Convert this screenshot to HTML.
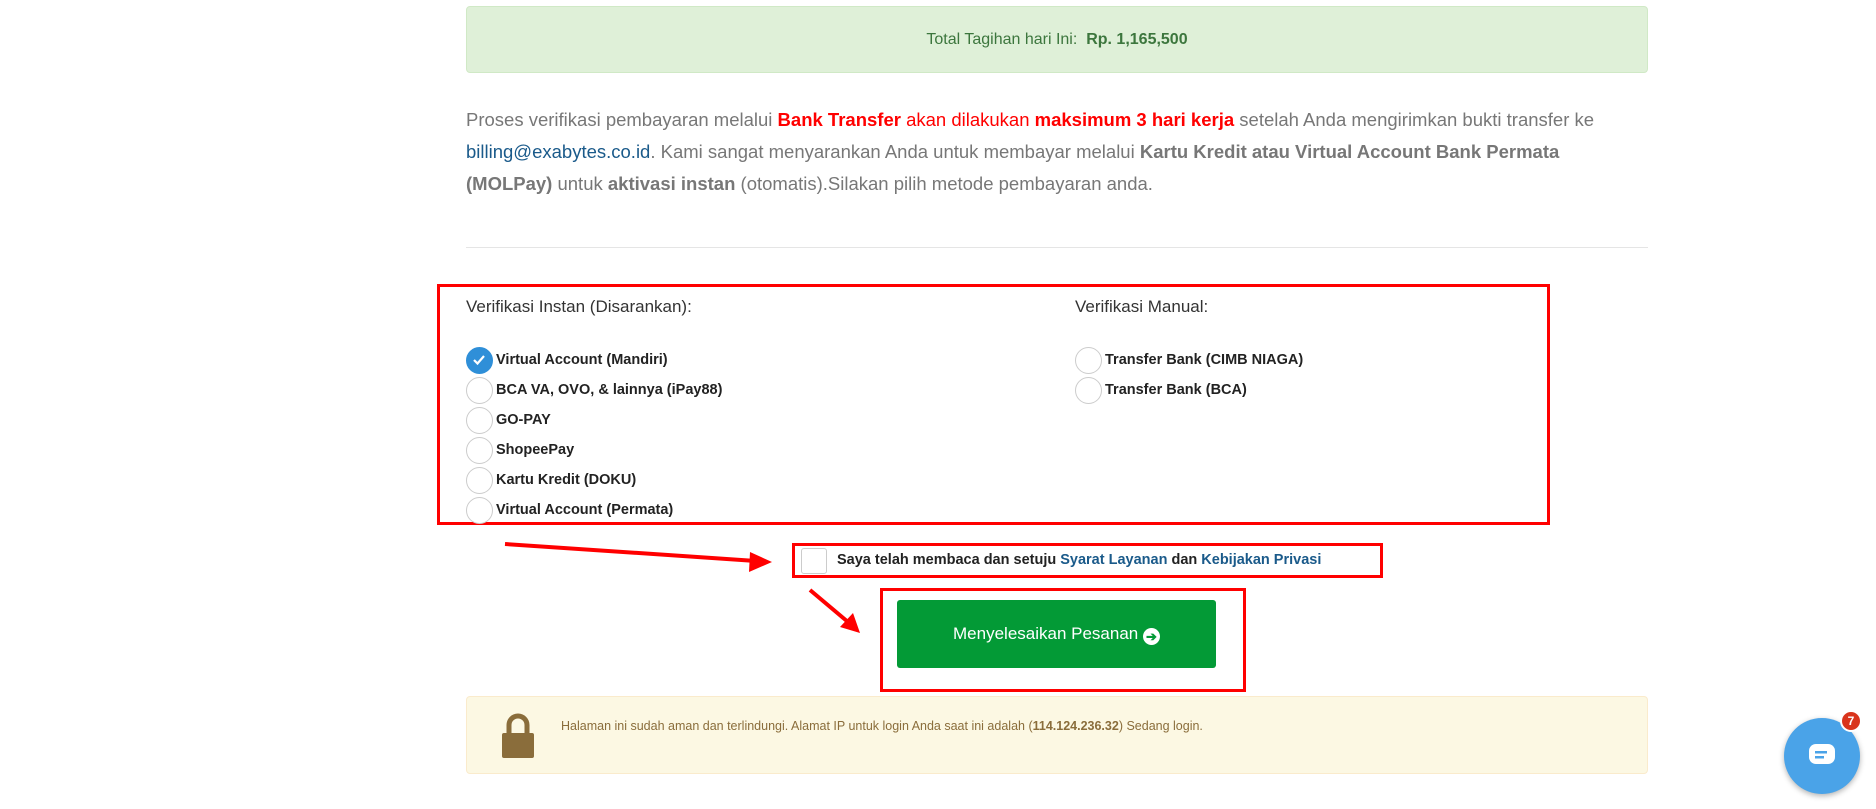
<!DOCTYPE html>
<html><head><meta charset="utf-8"><style>
*{box-sizing:border-box;margin:0;padding:0}
body{width:1876px;height:809px;background:#fff;font-family:"Liberation Sans",sans-serif;position:relative;overflow:hidden}
.abs{position:absolute}
.green{left:466px;top:6px;width:1182px;height:67px;background:#dff0d8;border:1px solid #d0e9c6;border-radius:4px;text-align:center;line-height:65px;font-size:16px;color:#3c763d}
.para{left:466px;top:104px;width:1182px;font-size:18.5px;line-height:32px;color:#777}
.red{color:#f00}
.hr{left:466px;top:247px;width:1182px;height:1px;background:#e5e5e5}
.box{border:3px solid #f00}
h4{position:absolute;font-size:17px;font-weight:normal;color:#333}
.opt{position:absolute;font-size:14.5px;font-weight:bold;color:#222;line-height:28px;height:28px;padding-left:30px}
.opt:before{content:"";position:absolute;left:0;top:1px;width:25px;height:25px;border:1px solid #ccc;border-radius:50%;background:#fff}
.opt.on:before{background:#2f8fd8;border-color:#2f8fd8}
.link{color:#1a5a8a}
</style></head><body>
<div class="abs green">Total Tagihan hari Ini:&nbsp; <b>Rp. 1,165,500</b></div>
<div class="abs para">Proses verifikasi pembayaran melalui <b class="red">Bank Transfer</b> <span class="red">akan dilakukan</span> <b class="red">maksimum 3 hari kerja</b> setelah Anda mengirimkan bukti transfer ke <span class="link">billing@exabytes.co.id</span>. Kami sangat menyarankan Anda untuk membayar melalui <b>Kartu Kredit atau Virtual Account Bank Permata (MOLPay)</b> untuk <b>aktivasi instan</b> (otomatis).Silakan pilih metode pembayaran anda.</div>
<div class="abs hr"></div>
<div class="abs box" style="left:437px;top:284px;width:1113px;height:241px"></div>
<h4 style="left:466px;top:297px">Verifikasi Instan (Disarankan):</h4>
<h4 style="left:1075px;top:297px">Verifikasi Manual:</h4>
<div class="opt on" style="left:466px;top:346px">Virtual Account (Mandiri)</div>
<svg class="abs" style="left:471px;top:352px" width="16" height="16"><path d="M3 8l3.5 3.5L13 4" stroke="#fff" stroke-width="2.2" fill="none"/></svg>
<div class="opt" style="left:466px;top:376px">BCA VA, OVO, &amp; lainnya (iPay88)</div>
<div class="opt" style="left:466px;top:406px">GO-PAY</div>
<div class="opt" style="left:466px;top:436px">ShopeePay</div>
<div class="opt" style="left:466px;top:466px">Kartu Kredit (DOKU)</div>
<div class="opt" style="left:466px;top:496px">Virtual Account (Permata)</div>
<div class="opt" style="left:1075px;top:346px">Transfer Bank (CIMB NIAGA)</div>
<div class="opt" style="left:1075px;top:376px">Transfer Bank (BCA)</div>
<div class="abs box" style="left:792px;top:543px;width:591px;height:35px"></div>
<div class="abs" style="left:801px;top:548px;width:26px;height:26px;border:1px solid #ccc;border-radius:3px"></div>
<div class="abs" style="left:837px;top:552px;font-size:14.5px;font-weight:bold;color:#222">Saya telah membaca dan setuju <span class="link">Syarat Layanan</span> dan <span class="link">Kebijakan Privasi</span></div>
<svg class="abs" style="left:0;top:0" width="1876" height="809">
<line x1="505" y1="544" x2="756" y2="561" stroke="#f00" stroke-width="4"/>
<polygon points="772,562 750,552 749,572" fill="#f00"/>
<line x1="810" y1="590" x2="848" y2="622" stroke="#f00" stroke-width="4"/>
<polygon points="860,633 840,627 853,613" fill="#f00"/>
</svg>
<div class="abs box" style="left:880px;top:588px;width:366px;height:104px"></div>
<div class="abs" style="left:897px;top:600px;width:319px;height:68px;background:#039a36;border-radius:3px;color:#fff;font-size:17px;text-align:center;line-height:68px">Menyelesaikan Pesanan&nbsp;<span style="display:inline-block;width:17px;height:17px;border-radius:50%;background:#fff;color:#039a36;font-size:13px;line-height:17px;font-weight:bold;vertical-align:-2px">➔</span></div>
<div class="abs" style="left:466px;top:696px;width:1182px;height:78px;background:#fcf8e3;border:1px solid #faebcc;border-radius:4px"></div>
<svg class="abs" style="left:500px;top:713px" width="36" height="46"><path d="M9 20V12a9 9 0 0 1 18 0v8" stroke="#8a6d3b" stroke-width="5" fill="none"/><rect x="2" y="20" width="32" height="25" rx="2" fill="#8a6d3b"/></svg>
<div class="abs" style="left:561px;top:719px;font-size:12.5px;color:#8a6d3b">Halaman ini sudah aman dan terlindungi. Alamat IP untuk login Anda saat ini adalah (<b>114.124.236.32</b>) Sedang login.</div>
<div class="abs" style="left:1784px;top:718px;width:76px;height:76px;border-radius:50%;background:#4aa3e8;box-shadow:0 2px 6px rgba(0,0,0,.3)"></div>
<svg class="abs" style="left:1808px;top:743px" width="28" height="24"><rect x="1" y="1" width="26" height="20" rx="7" fill="#fff"/><rect x="7" y="8" width="12" height="2.5" fill="#4aa3e8"/><rect x="7" y="13" width="9" height="2.5" fill="#4aa3e8"/></svg>
<div class="abs" style="left:1840px;top:710px;width:22px;height:22px;border-radius:50%;background:#d9341c;border:2px solid #fff;color:#fff;font-size:12px;font-weight:bold;text-align:center;line-height:18px">7</div>
</body></html>
